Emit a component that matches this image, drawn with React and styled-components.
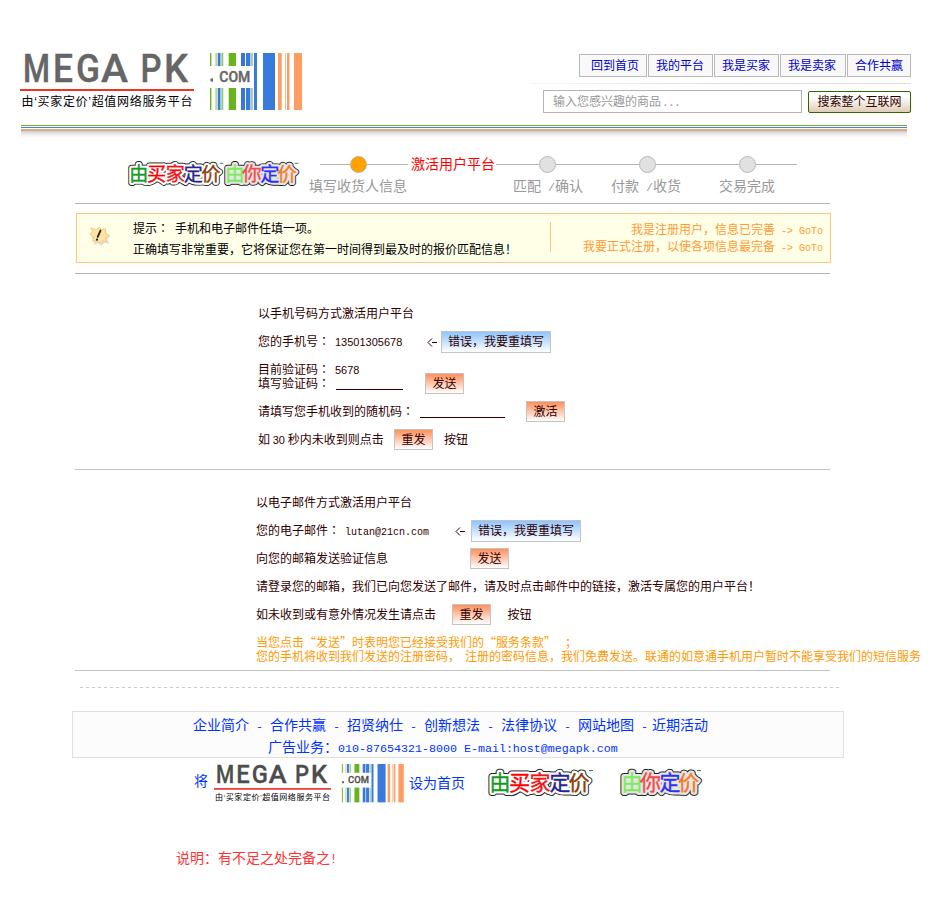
import React from "react";
import styled, { createGlobalStyle } from "styled-components";

const CJK = '"Noto Sans CJK SC", sans-serif';

const GlobalStyle = createGlobalStyle`
  * { box-sizing: border-box; }
  body { margin: 0; background: #fff; overflow: hidden; }
  button { font: inherit; }
`;

const Page = styled.div`
  width: 941px;
  height: 904px;
  display: flex;
  flex-direction: column;
  font: 12px/14px ${CJK};
  color: #300000;
  white-space: pre;
  overflow: hidden;
`;

/* Header */
const Header = styled.header`
  height: 125px;
  padding: 50px 30px 0 20px;
  display: flex;
  justify-content: space-between;
`;
const HeaderTools = styled.div`
  width: 381px;
  padding-top: 4px;
  display: flex;
  flex-direction: column;
`;
const Nav = styled.nav`
  display: flex;
  justify-content: flex-end;
  gap: 1px;
`;
const NavLink = styled.a`
  width: ${(p) => p.$w}px;
  height: 23px;
  padding-left: ${(p) => p.$pad || 7}px;
  border: 1px solid #b9b9b9;
  background: #f8f8f8;
  color: #0000c8;
  line-height: 20px;
`;
const FadeLine = styled.div`
  height: 1px;
  margin: 6px 0;
  background: linear-gradient(90deg, #f8f8f8, #dedede 50%);
`;
const SearchRow = styled.form`
  display: flex;
  align-items: center;
  margin-left: 13px;
  gap: 6px;
`;
const SearchField = styled.div`
  width: 259px;
  height: 23px;
  padding-left: 9px;
  border: 1px solid #b3b3b3;
  color: #999;
  line-height: 20px;
`;
const SearchButton = styled.button`
  width: 103px;
  height: 22px;
  padding: 0 0 2px;
  border: 1px solid #336600;
  border-radius: 2px;
  background: linear-gradient(#fff 25%, #dfcdb5);
  color: #300000;
  line-height: 18px;
`;
const Stripes = styled.div`
  width: 886px;
  height: 13px;
  margin-left: 21px;
  background: linear-gradient(
    #73b12e 0 1px, #fff 1px 2px, #4b84c4 2px 3px, #fff 3px 4px,
    #f5a66d 4px 5px, #b5b0ad 5px 6px, #d8d4d2 6px 7px, #f0ebe8 9px, #fff 13px
  );
`;

/* Progress */
const Progress = styled.section`
  height: 65px;
  padding: 17px 0 0 127px;
  display: flex;
`;
const StickerPair = styled.div`
  display: flex;
  width: 182px;
  padding-top: 6px;
`;
const Steps = styled.div`
  display: flex;
  flex-direction: column;
`;
const Track = styled.div`
  display: flex;
  align-items: center;
  height: 19px;
  padding-left: 11px;
`;
const Segment = styled.i`
  width: ${(p) => p.$w}px;
  height: 1px;
  background: #b3b3b3;
`;
const Dot = styled.i`
  width: 17px;
  height: 17px;
  border: 1px solid ${(p) => (p.$on ? "#c4b391" : "#b8b8b8")};
  border-radius: 50%;
  background: ${(p) => (p.$on ? "#ffa200" : "#e1e1e1")};
`;
const CurrentStep = styled.b`
  font-weight: 400;
  width: 88px;
  margin-top: -3px;
  padding-left: 3px;
  font-size: 14px;
  color: #f00;
`;
const StepLabels = styled.div`
  display: flex;
  padding-top: 3px;
  color: #999;
  font-size: 14px;
  line-height: 16px;
`;
const StepLabel = styled.span`
  width: ${(p) => p.$w}px;
`;

const Rule = styled.hr`
  width: 755px;
  height: 1px;
  flex: none;
  border: 0;
  margin: 0 0 0 75px;
  background: ${(p) => p.$color || "#b3b3b3"};
`;

/* Tip box */
const Tip = styled.section`
  width: 755px;
  height: 50px;
  margin: 9px 0 10px 76px;
  flex: none;
  border: 1px solid #fdc87b;
  background: #ffffe8;
  display: flex;
  color: #000;
`;
const TipIcon = styled.div`
  width: 56px;
  padding: 12px 0 0 12px;
`;
const TipText = styled.div`
  width: 417px;
  padding-top: 3px;
  line-height: 21px;
`;
const TipLinks = styled.div`
  width: 273px;
  height: 30px;
  margin-top: 8px;
  border-left: 1px solid #fdc87b;
  color: #ff9933;
  text-align: right;
  line-height: 17px;
`;
const TipLink = styled.a`
  display: block;
  height: 17px;
  margin-top: ${(p) => (p.$first ? -2 : 0)}px;
`;

/* Forms */
const Form = styled.section`
  flex: none;
  padding: ${(p) => p.$top}px 0 0 ${(p) => p.$left}px;
  height: ${(p) => p.$h}px;
  display: flex;
  flex-direction: column;
`;
const Row = styled.div`
  height: ${(p) => (p.$tight ? 14 : 28)}px;
  flex: none;
  display: flex;
  align-items: center;
  margin-top: ${(p) => p.$gap || 0}px;
`;
const Cell = styled.span`
  flex: none;
  margin-top: -2px;
  width: ${(p) => (p.$w ? `${p.$w}px` : "auto")};
`;
const Notice = styled(Row)`
  color: #ff9900;
`;
const Colon = styled.span`
  font-family: "Noto Sans CJK TC", sans-serif;
  line-height: 0;
`;
const Mono = styled.span`
  font-family: "Liberation Mono", monospace;
  font-size: ${(p) => p.$size || 10}px;
  line-height: 0;
`;
const Digits = styled.span`
  font-family: "Liberation Sans", sans-serif;
  font-size: 11px;
  line-height: 0;
`;
const Arrow = styled.svg`
  display: block;
  width: 10px;
  height: 9px;
  margin-right: ${(p) => p.$after}px;
  fill: none;
  stroke: #300000;
`;
const Blank = styled.i`
  width: ${(p) => p.$w}px;
  height: 1px;
  margin: 11px ${(p) => p.$after}px 0 0;
  background: #300000;
`;
const ActionButton = styled.button`
  width: ${(p) => (p.$blue ? 110 : 39)}px;
  height: ${(p) => (p.$blue ? 22 : 21)}px;
  flex: none;
  margin: 0 11px ${(p) => (p.$raise ? 2 : 1)}px 0;
  padding: 0 0 2px;
  border: 1px solid #c4c4c4;
  background: linear-gradient(${(p) => (p.$blue ? "#8fc4ff, #fff" : "#ff8f5a, #fff")});
  color: #300000;
  line-height: 17px;
  text-align: center;
`;

/* Footer */
const Dashes = styled.div`
  width: 759px;
  height: 1px;
  flex: none;
  margin: 16px 0 23px 80px;
  background: repeating-linear-gradient(90deg, #c8c8c8 0 3px, #fff 3px 6px);
`;
const FooterBox = styled.footer`
  width: 772px;
  height: 47px;
  flex: none;
  margin-left: 72px;
  border: 1px solid #e0e0e0;
  background: #fcfcfc;
  color: #0033ff;
  font-size: 14px;
`;
const FooterLinks = styled.div`
  display: flex;
  padding: 1px 0 0 120px;
  height: 24px;
  line-height: 22px;
`;
const FooterLink = styled.a`
  width: ${(p) => p.$w || 77}px;
`;
const Contact = styled.div`
  padding-left: 195px;
  line-height: 20px;
`;
const HomeRow = styled.div`
  height: 48px;
  flex: none;
  padding: 4px 0 0 194px;
  display: flex;
  color: #0033ff;
  font-size: 14px;
`;
const HomeText = styled.span`
  width: ${(p) => p.$w}px;
  padding-top: ${(p) => p.$top}px;
`;
const StickerSlot = styled.div`
  width: ${(p) => p.$w}px;
  padding-top: 6px;
`;
const Note = styled.p`
  margin: 43px 0 0 176px;
  color: #ff3333;
  font-size: 14px;
  line-height: 16px;
`;
const Art = styled.svg`
  display: block;
  flex: none;
  overflow: visible;
`;

const LETTERS = [
  ["M", 3, 27], ["E", 33, 20], ["G", 56, 24], ["A", 81, 27],
  ["P", 120.5, 21], ["K", 144, 24],
];

const BARS = [
  [190, 1.4, "#69b41c"], [195.5, 1.2, "#9acb65"], [197.7, 2.8, "#397bdc"],
  [201.3, 2, "#8fca7b"], [208.7, 7.3, "#69b41c"], [221, 4, "#3878d8"],
  [226, 4.4, "#397bdc"], [231.3, 1.4, "#8bbb83"], [234, 3, "#397bdc"],
  [243, 12, "#397bdc"], [258, 3.7, "#ff9c61"], [265, 1, "#ffb88c"],
  [267, 2.5, "#ff9c61"], [274, 8, "#ff9c61"],
];

function Logo({ scale = 1, dark }) {
  const ink = dark ? "#4d4d4d" : "#666";
  return (
    <Art width={285 * scale} height={62 * scale} viewBox="0 0 285 62">
      <g fill={ink} stroke={ink} strokeWidth=".4" fontFamily="Roboto" fontWeight="500" fontSize="39.5">
        {LETTERS.map(([c, x, w]) => (
          <text key={c} x={x} y="31.7" textLength={w} lengthAdjust="spacingAndGlyphs">{c}</text>
        ))}
      </g>
      <rect y="39" width="174" height="2" fill={dark ? "#e80000" : "#ee3326"} />
      <text x="1.5" y="56" fontSize="12" fill="#000" textLength="171" fontFamily="Liberation Sans, Noto Sans CJK SC">由‘买家定价’超值网络服务平台</text>
      {BARS.map(([x, w, c]) => (
        <rect key={x} x={x} y="3" width={w} height="57" fill={c} />
      ))}
      <rect x="189" y="16" width="44.4" height="22" fill="#fff" />
      <rect x="190.5" y="28.5" width="2.5" height="3" fill={ink} />
      <text x="199.3" y="31.7" fontSize="14" fill={ink} stroke={ink} strokeWidth=".4" textLength="31" lengthAdjust="spacingAndGlyphs" fontFamily="Roboto" fontWeight="500">COM</text>
    </Art>
  );
}

const BUYER = [["由", 2.5, "#119b22"], ["买", 22, "#fa0000"], ["家", 42.5, "#ef1515"], ["定", 62.5, "#252590"], ["价", 81.5, "#8c3d08"]];
const YOU = [["由", 2.5, "#7ceb5c"], ["你", 21, "#f54848"], ["定", 40.5, "#3030f0"], ["价", 59, "#f97922"]];

function Sticker({ chars, width, scale = 1, grey }) {
  const outline = (stroke, strokeWidth) => (
    <g stroke={stroke} fill={stroke} strokeWidth={strokeWidth} strokeLinejoin="round" aria-hidden="true">
      {chars.map(([c, x]) => <text key={x} x={x} y="21.5">{c}</text>)}
    </g>
  );
  return (
    <Art width={width * scale} height={28 * scale} viewBox={`0 0 ${width} 28`}>
      <g fontFamily="Noto Sans CJK SC" fontWeight="400" fontSize="21">
        {outline("#222", 7)}
        {outline(grey ? "#e5e5e5" : "#fff", 5)}
        {chars.map(([c, x, fill]) => <text key={x} x={x} y="21.5" fill={fill} stroke={fill} strokeWidth=".4">{c}</text>)}
      </g>
      <path d={`M${width - 4} 2.5h4`} stroke="#447766" />
    </Art>
  );
}

const BackArrow = ({ after = 4 }) => (
  <Arrow viewBox="0 0 10 9" $after={after}><path d="M5 0.5L1 4.5L5 8.5M5 4.5h5" /></Arrow>
);

const Burst = () => (
  <Art width="22" height="20" viewBox="0 0 24 22">
    <path d="M3 3l5 2 3-4 3 3 4-1 0 5 5 2-4 3 2 6-5-2-3 4-4-3-5 2 1-6-4-3 3-3z" fill="#c9c5c2" opacity=".55" transform="translate(1 1)" />
    <path d="M2 2l6 2 3-3 3 3 4-1 0 5 4 2-4 3 1 5-4-2-3 3-4-3-4 1 1-5-4-3 3-3z" fill="#ffe2a4" stroke="#f5bd72" strokeWidth=".8" />
    <path d="M12.5 5L9.5 12" stroke="#222" strokeWidth="2" strokeLinecap="round" />
    <circle cx="8.7" cy="15" r="1.2" fill="#222" />
  </Art>
);

export default function App() {
  return (
    <Page>
      <GlobalStyle />
      <Header>
        <Logo />
        <HeaderTools>
          <Nav>
            <NavLink $w={68} $pad={11}>回到首页</NavLink>
            <NavLink $w={65}>我的平台</NavLink>
            <NavLink $w={65}>我是买家</NavLink>
            <NavLink $w={66}>我是卖家</NavLink>
            <NavLink $w={64}>合作共赢</NavLink>
          </Nav>
          <FadeLine />
          <SearchRow>
            <SearchField>输入您感兴趣的商品 . . .</SearchField>
            <SearchButton type="button">搜索整个互联网</SearchButton>
          </SearchRow>
        </HeaderTools>
      </Header>
      <Stripes />

      <Progress>
        <StickerPair>
          <Sticker chars={BUYER} width={106} scale={0.91} />
          <Sticker chars={YOU} width={82} scale={0.92} grey />
        </StickerPair>
        <Steps>
          <Track>
            <Segment $w={30} /><Dot $on /><Segment $w={41} />
            <CurrentStep>激活用户平台</CurrentStep>
            <Segment $w={43} /><Dot /><Segment $w={83} /><Dot />
            <Segment $w={83} /><Dot /><Segment $w={41} />
          </Track>
          <StepLabels>
            <StepLabel $w={204}>填写收货人信息</StepLabel>
            <StepLabel $w={98}>匹配<Mono $size={11.67}> /</Mono>确认</StepLabel>
            <StepLabel $w={108}>付款<Mono $size={11.67}> /</Mono>收货</StepLabel>
            <StepLabel>交易完成</StepLabel>
          </StepLabels>
        </Steps>
      </Progress>
      <Rule />
      <Tip>
        <TipIcon><Burst /></TipIcon>
        <TipText>
          <div>提示<Colon>：</Colon><Mono> </Mono>手机和电子邮件任填一项。</div>
          <div>正确填写非常重要，它将保证您在第一时间得到最及时的报价匹配信息！</div>
        </TipText>
        <TipLinks>
          <TipLink $first>我是注册用户，信息已完善<Mono>{" -> GoTo"}</Mono></TipLink>
          <TipLink>我要正式注册，以使各项信息最完备<Mono>{" -> GoTo"}</Mono></TipLink>
        </TipLinks>
      </Tip>
      <Rule />

      <Form $top={26} $left={258} $h={195}>
        <Row><Cell>以手机号码方式激活用户平台</Cell></Row>
        <Row>
          <Cell $w={77}>您的手机号<Colon>：</Colon></Cell>
          <Cell $w={92}><Digits>13501305678</Digits></Cell>
          <BackArrow />
          <ActionButton $blue>错误，我要重填写</ActionButton>
        </Row>
        <Row $tight $gap={7}>
          <Cell $w={77}>目前验证码<Colon>：</Colon></Cell>
          <Cell><Digits>5678</Digits></Cell>
        </Row>
        <Row $tight>
          <Cell $w={78}>填写验证码<Colon>：</Colon></Cell>
          <Blank $w={67} $after={22} />
          <ActionButton>发送</ActionButton>
        </Row>
        <Row $gap={7}>
          <Cell $w={162}>请填写您手机收到的随机码<Colon>：</Colon></Cell>
          <Blank $w={85} $after={21} />
          <ActionButton>激活</ActionButton>
        </Row>
        <Row>
          <Cell $w={136}>如 <Digits>30</Digits> 秒内未收到则点击</Cell>
          <ActionButton>重发</ActionButton>
          <Cell>按钮</Cell>
        </Row>
      </Form>
      <Rule $color="#c4c4c4" />

      <Form $top={19} $left={256} $h={200}>
        <Row><Cell>以电子邮件方式激活用户平台</Cell></Row>
        <Row>
          <Cell $w={89}>您的电子邮件<Colon>：</Colon></Cell>
          <Cell $w={110}><Mono>lutan@21cn.com</Mono></Cell>
          <BackArrow after={6} />
          <ActionButton $blue>错误，我要重填写</ActionButton>
        </Row>
        <Row>
          <Cell $w={214}>向您的邮箱发送验证信息</Cell>
          <ActionButton $raise>发送</ActionButton>
        </Row>
        <Row><Cell>请登录您的邮箱，我们已向您发送了邮件，请及时点击邮件中的链接，激活专属您的用户平台！</Cell></Row>
        <Row>
          <Cell $w={196}>如未收到或有意外情况发生请点击</Cell>
          <ActionButton>重发</ActionButton>
          <Cell>{"  "}按钮</Cell>
        </Row>
        <Notice $tight $gap={7}>
          <Cell $w={309}>当您点击“发送”时表明您已经接受我们的“服务条款”</Cell>
          <Cell>；</Cell>
        </Notice>
        <Notice $tight>
          <Cell $w={209}>您的手机将收到我们发送的注册密码，</Cell>
          <Cell>注册的密码信息，我们免费发送。联通的如意通手机用户暂时不能享受我们的短信服务</Cell>
        </Notice>
      </Form>
      <Rule $color="#c4c4c4" />

      <Dashes />
      <FooterBox>
        <FooterLinks>
          {["企业简介", "合作共赢", "招贤纳仕", "创新想法", "法律协议"].map((t) => (
            <FooterLink key={t}>{t}<Mono $size={11.67}> - </Mono></FooterLink>
          ))}
          <FooterLink $w={74}>网站地图<Mono $size={11.67}> -</Mono></FooterLink>
          <FooterLink>近期活动</FooterLink>
        </FooterLinks>
        <Contact>广告业务：<Mono $size={11.67}>010-87654321-8000 E-mail:host@megapk.com</Mono></Contact>
      </FooterBox>
      <HomeRow>
        <HomeText $w={20} $top={11}>将</HomeText>
        <Logo scale={0.673} dark />
        <HomeText $w={81} $top={13}>{" "}设为首页</HomeText>
        <StickerSlot $w={132}><Sticker chars={BUYER} width={106} /></StickerSlot>
        <StickerSlot $w={82}><Sticker chars={YOU} width={82} grey /></StickerSlot>
      </HomeRow>
      <Note>说明：有不足之处完备之<Mono $size={12}>!</Mono></Note>
    </Page>
  );
}
